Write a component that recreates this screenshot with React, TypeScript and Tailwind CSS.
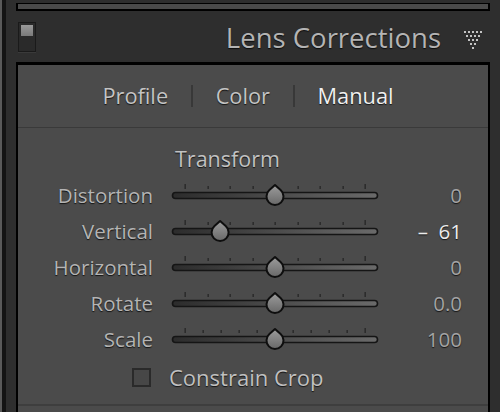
import React from 'react';

const shadow = '[text-shadow:0_1px_1px_rgba(0,0,0,0.75)]';

type SliderProps = { value: number; min: number; max: number; ticks: number };

const Slider = ({ value, min, max, ticks }: SliderProps) => {
  // track runs x 2..207 inside the svg, ticks from 15 to 195
  const left = 15;
  const right = 195;
  const cx = left + ((value - min) / (max - min)) * (right - left);
  const step = (right - left) / (ticks - 1);
  const marks = Array.from({ length: ticks }, (_, i) => left + i * step);
  return (
    <svg width="212" height="26" viewBox="0 0 212 26" className="block overflow-visible">
      <defs>
        <linearGradient id="trk" x1="0" x2="1" y1="0" y2="0">
          <stop offset="0" stopColor="#2c2c2c" />
          <stop offset="1" stopColor="#6a6a6a" />
        </linearGradient>
        <linearGradient id="thm" x1="0" x2="0" y1="0" y2="1">
          <stop offset="0" stopColor="#9c9c9c" />
          <stop offset="1" stopColor="#686868" />
        </linearGradient>
      </defs>
      {marks.map((x, i) => {
        const tall = i === 0 || i === ticks - 1;
        return (
          <rect key={i} x={Math.round(x) - 0.5} y={tall ? 1 : 3} width="1.3" height={tall ? 5 : 3} fill="#262626" />
        );
      })}
      <rect x="2.5" y="9.5" width="205" height="6" rx="3" fill="url(#trk)" stroke="#151515" strokeWidth="1.6" />
      <path
        transform={`translate(${cx} 13.5)`}
        d="M0,-11.5 L5.6,-6.4 A8.5,8.5 0 1,1 -5.6,-6.4 Z"
        fill="url(#thm)"
        stroke="#0e0e0e"
        strokeWidth="2"
        strokeLinejoin="round"
      />
    </svg>
  );
};

const rows = [
  { label: 'Distortion', value: 0, text: '0', min: -100, max: 100, ticks: 9 },
  { label: 'Vertical', value: -61, text: '–  61', min: -100, max: 100, ticks: 9, active: true },
  { label: 'Horizontal', value: 0, text: '0', min: -100, max: 100, ticks: 9 },
  { label: 'Rotate', value: 0, text: '0.0', min: -10, max: 10, ticks: 9 },
  { label: 'Scale', value: 100, text: '100', min: 50, max: 150, ticks: 11 },
];

const TriangleDots = () => {
  const dots: [number, number][] = [];
  for (let r = 0; r < 5; r++) {
    for (let c = 0; c < 5 - r; c++) dots.push([c * 4 + r * 2, r * 4]);
  }
  return (
    <svg width="18" height="18" viewBox="0 0 18 18" className="block">
      {dots.map(([x, y], i) => (
        <rect key={i} x={x} y={y} width="2" height="2" fill="#c4c4c4" />
      ))}
    </svg>
  );
};

export default function App() {
  return (
    <div className="w-[500px] h-[412px] flex bg-[#2e2e2e] overflow-hidden font-['Open_Sans',sans-serif]">
      <div className="w-[2px] bg-[#5a5a5a]" />
      <div className="w-[4px] bg-[#141414]" />
      <div className="flex-1 flex flex-col pl-[10px] pr-[10px]">
        <div className="mt-[3px] h-[8px] bg-[#4a4a4a] border-t border-b-2 border-x-2 border-black" />

        <div className="h-[51px] shrink-0 flex items-center">
          <div className="ml-[2px] mt-[1px] w-[18px] h-[30px] border border-[#1a1a1a] bg-[#2a2a2a] flex flex-col shadow-[0_1px_0_#3a3a3a]">
            <div className="h-[11px] m-[2px] mb-0 bg-gradient-to-b from-[#9a9a9a] to-[#7a7a7a]" />
          </div>
          <div className={`ml-auto mt-[3px] text-[27.5px] text-[#b4b4b4] leading-none ${shadow}`}>
            Lens Corrections
          </div>
          <div className="ml-[23px] mr-[8px] mt-[7px]">
            <TriangleDots />
          </div>
        </div>

        <div className="flex-1 border-t-[3px] border-x-2 border-black bg-[#4b4b4b] flex flex-col">
          <div className="h-[63px] shrink-0 flex items-center justify-center text-[21.8px] pr-[10px] border-b border-[#3a3a3a]">
            <span className={`text-[#c4c4c4] ${shadow}`}>Profile</span>
            <span className="mx-[23px] w-[1.5px] h-[22px] bg-[#383838]" />
            <span className={`text-[#c4c4c4] ${shadow}`}>Color</span>
            <span className="mx-[23px] w-[1.5px] h-[22px] bg-[#383838]" />
            <span className={`text-[#f0f0f0] ${shadow}`}>Manual</span>
          </div>

          <div className="pt-[13px] flex flex-col">
            <div className="h-[36px] flex items-center">
              <span className={`ml-[157px] text-[21.5px] text-[#c2c2c2] ${shadow}`}>Transform</span>
            </div>

            {rows.map((r) => (
              <div key={r.label} className="h-[36px] flex items-center">
                <div className={`w-[135px] text-right text-[20.5px] text-[#b4b4b4] ${shadow}`}>{r.label}</div>
                <div className="ml-[17px] mt-[1px]">
                  <Slider value={r.value} min={r.min} max={r.max} ticks={r.ticks} />
                </div>
                <div
                  className={`w-[80px] text-right text-[20.5px] whitespace-pre ${r.active ? 'text-[#ececec]' : 'text-[#a4a4a4]'} ${shadow}`}
                >
                  {r.text}
                </div>
              </div>
            ))}

            <div className="h-[40px] flex items-center">
              <div className="ml-[114px] w-[19px] h-[19px] border-2 border-[#2a2a2a] bg-[#474747]" />
              <span className={`ml-[18px] text-[22px] text-[#c0c0c0] ${shadow}`}>Constrain Crop</span>
            </div>
            <div className="mt-[7px] h-[2px] bg-[#3e3e3e]" />
          </div>
        </div>
      </div>
    </div>
  );
}
